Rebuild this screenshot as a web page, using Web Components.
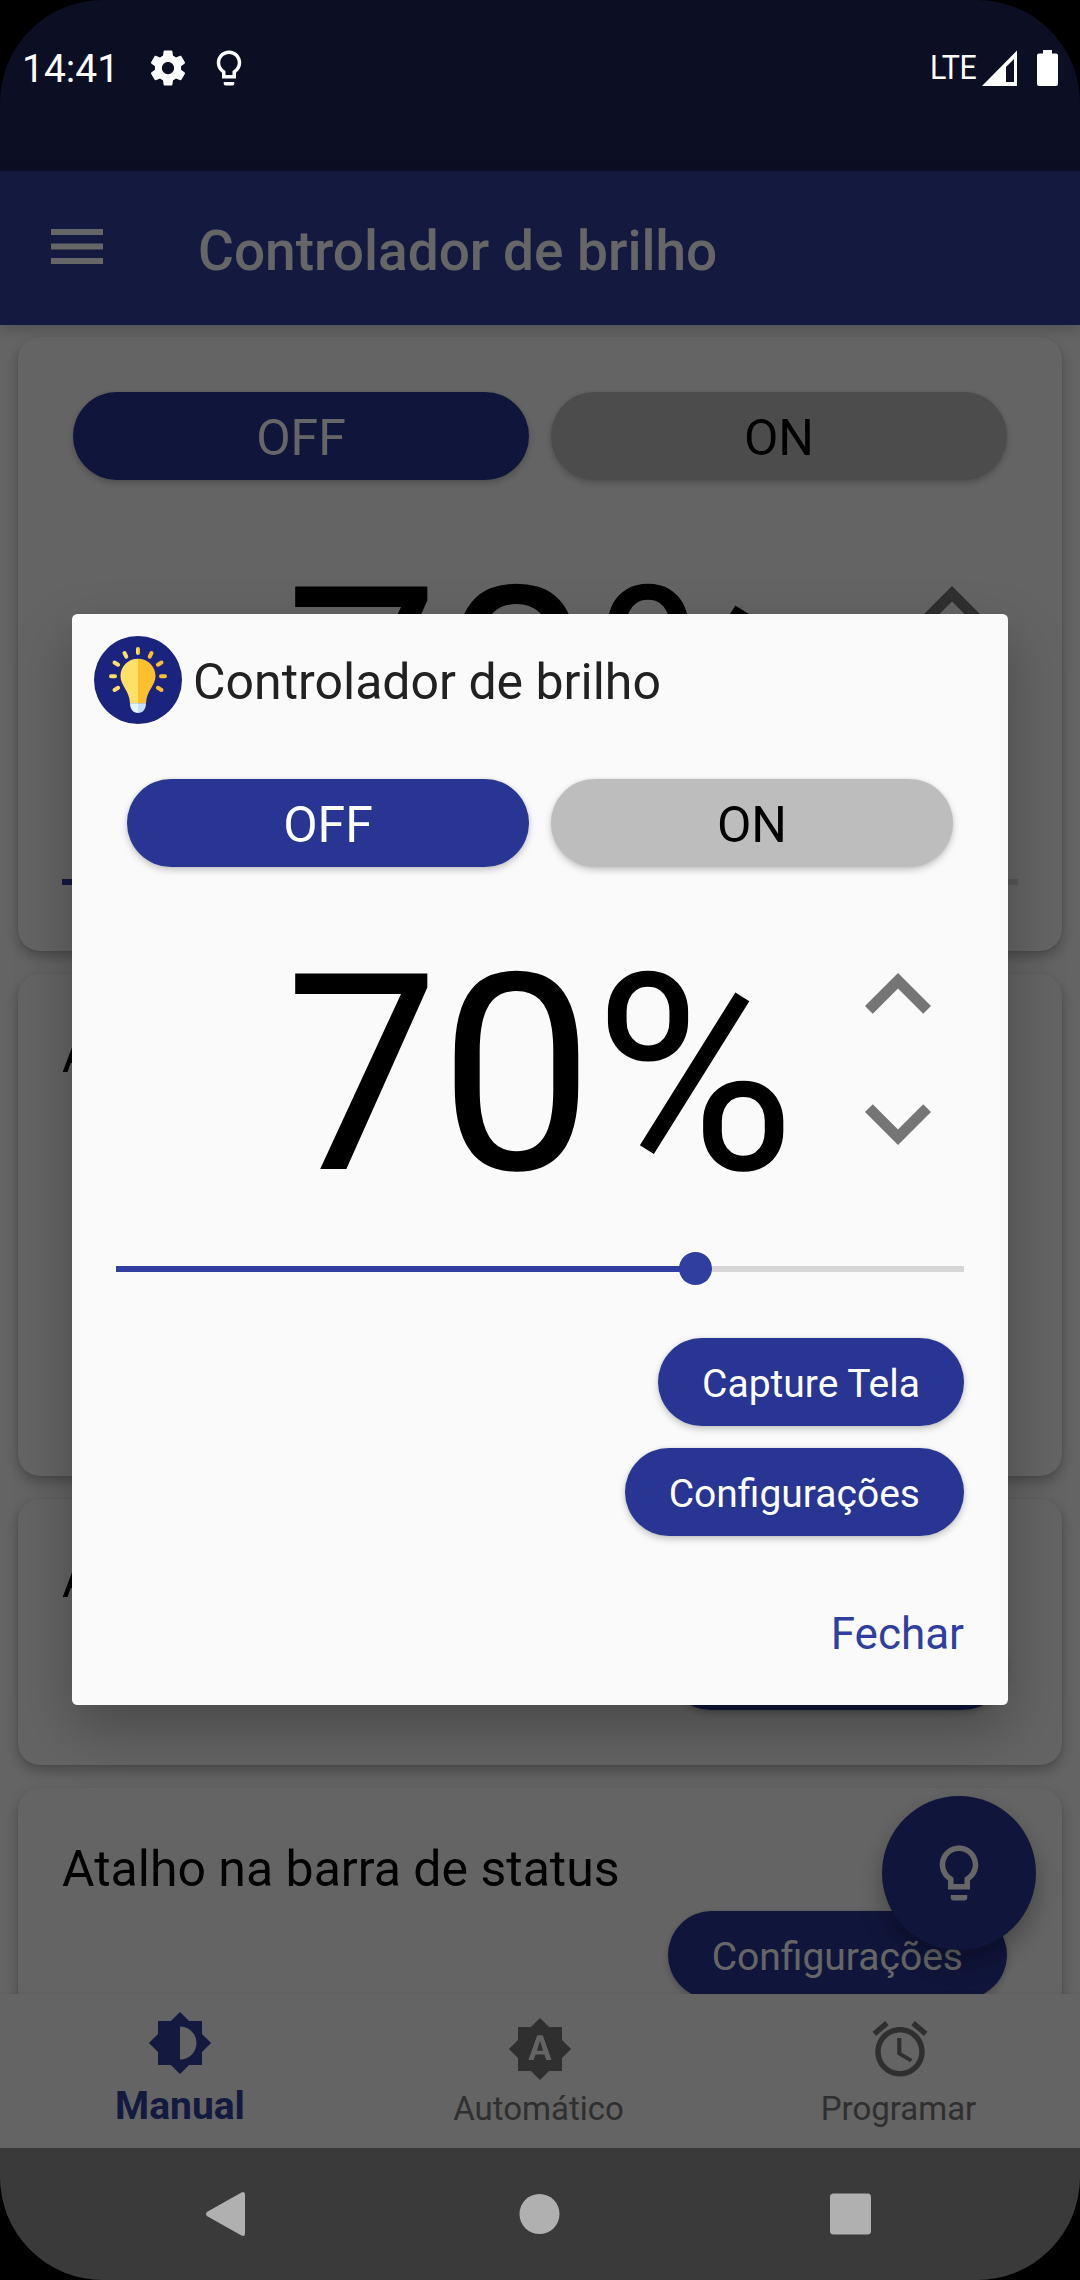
<!DOCTYPE html>
<html lang="pt-BR">
<head>
<meta charset="utf-8">
<title>Controlador de brilho</title>
<style>
  html, body {
    margin: 0;
    background: #000;
  }
  body {
    width: 1080px;
    height: 2280px;
    overflow: hidden;
    font-family: Roboto, sans-serif;
  }
</style>
</head>
<body>
<phone-screen></phone-screen>

<script>
const ICONS = {
  settings: 'M19.43 12.98c.04-.32.07-.64.07-.98s-.03-.66-.07-.98l2.11-1.65c.19-.15.24-.42.12-.64l-2-3.46c-.12-.22-.39-.3-.61-.22l-2.49 1c-.52-.4-1.08-.73-1.69-.98l-.38-2.65C14.46 2.18 14.25 2 14 2h-4c-.25 0-.46.18-.49.42l-.38 2.65c-.61.25-1.17.59-1.69.98l-2.49-1c-.23-.09-.49 0-.61.22l-2 3.46c-.13.22-.07.49.12.64l2.11 1.65c-.04.32-.07.65-.07.98s.03.66.07.98l-2.11 1.65c-.19.15-.24.42-.12.64l2 3.46c.12.22.39.3.61.22l2.49-1c.52.4 1.08.73 1.69.98l.38 2.65c.03.24.24.42.49.42h4c.25 0 .46-.18.49-.42l.38-2.65c.61-.25 1.17-.59 1.69-.98l2.49 1c.23.09.49 0 .61-.22l2-3.46c.12-.22.07-.49-.12-.64l-2.11-1.65zM12 15.5c-1.93 0-3.5-1.57-3.5-3.5s1.57-3.5 3.5-3.5 3.5 1.57 3.5 3.5-1.57 3.5-3.5 3.5z',
  bulb: 'M9 21c0 .55.45 1 1 1h4c.55 0 1-.45 1-1v-1H9v1zm3-19C8.14 2 5 5.14 5 9c0 2.38 1.19 4.47 3 5.74V18h8v-3.26c1.81-1.27 3-3.36 3-5.74 0-3.86-3.14-7-7-7zm2.85 11.1l-.85.6V16h-4v-2.3l-.85-.6C7.8 12.16 7 10.63 7 9c0-2.76 2.24-5 5-5s5 2.24 5 5c0 1.63-.8 3.16-2.15 4.1z',
  up: 'M7.41 15.41L12 10.83l4.59 4.58L18 14l-6-6-6 6z',
  down: 'M7.41 8.59L12 13.17l4.59-4.58L18 10l-6 6-6-6z',
  manual: 'M20 15.31L23.31 12 20 8.69V4h-4.69L12 .69 8.69 4H4v4.69L.69 12 4 15.31V20h4.69L12 23.31 15.31 20H20v-4.69zM12 18V6c3.31 0 6 2.69 6 6s-2.69 6-6 6z',
  auto: 'M10.85 12.65h2.3L12 9l-1.15 3.65zM20 8.69V4h-4.69L12 .69 8.69 4H4v4.69L.69 12 4 15.31V20h4.69L12 23.31 15.31 20H20v-4.69L23.31 12 20 8.69zM14.3 16l-.7-2h-3.2l-.7 2H7.8L11 7h2l3.2 9h-1.9z',
  alarm: 'M22 5.72l-4.6-3.86-1.29 1.53 4.6 3.86L22 5.72zM7.88 3.39L6.6 1.86 2 5.71l1.29 1.53 4.59-3.85zM12.5 8H11v6l4.75 2.85.75-1.23-4-2.37V8zM12 4c-4.97 0-9 4.03-9 9s4.02 9 9 9c4.97 0 9-4.03 9-9s-4.03-9-9-9zm0 16c-3.87 0-7-3.13-7-7s3.13-7 7-7 7 3.13 7 7-3.13 7-7 7z'
};

// <md-icon name="..." size="..">
class MdIcon extends HTMLElement {
  connectedCallback() {
    const size = this.getAttribute('size') || 66;
    this.attachShadow({ mode: 'open' });
    this.shadowRoot.innerHTML = `
      <style>
        :host { display: block; flex: none; width: ${size}px; height: ${size}px; }
        svg { display: block; fill: currentColor; }
      </style>
      <svg width="${size}" height="${size}" viewBox="0 0 24 24"><path d="${ICONS[this.getAttribute('name')]}"/></svg>
    `;
  }
}
customElements.define('md-icon', MdIcon);

class StatusBar extends HTMLElement {
  connectedCallback() {
    this.attachShadow({ mode: 'open' });
    this.shadowRoot.innerHTML = `
      <style>
        :host {
          display: flex;
          justify-content: space-between;
          align-items: flex-start;
          box-sizing: border-box;
          flex: none;
          height: 171px;
          padding: 46px 22px 0 22px;
          background: #0c0e24;
          color: #fff;
        }
        div { display: flex; align-items: center; height: 43px; }
        .time { font-size: 39px; line-height: 46px; width: 125px; padding-top: 2px; }
        .lte {
          font-size: 33px;
          line-height: 43px;
          width: 52px;
          transform: scaleX(.92);
          transform-origin: 0 50%;
          letter-spacing: -.5px;
        }
        svg { display: block; }
      </style>
      <div>
        <span class="time">14:41</span>
        <md-icon name="settings" size="42"></md-icon>
        <md-icon name="bulb" size="42" style="margin-left:19px"></md-icon>
      </div>
      <div>
        <span class="lte">LTE</span>
        <svg width="76" height="36" viewBox="0 0 76 36" fill="#fff">
          <path fill-rule="evenodd" d="M0 36L35 0.500V36zM24 32h8V9l-8 8z"/>
          <path d="M61 0h9v3.500h4a2 2 0 0 1 2 2V34a2 2 0 0 1-2 2H57a2 2 0 0 1-2-2V5.500a2 2 0 0 1 2-2h4z"/>
        </svg>
      </div>
    `;
  }
}
customElements.define('status-bar', StatusBar);

class AppBar extends HTMLElement {
  connectedCallback() {
    this.attachShadow({ mode: 'open' });
    this.shadowRoot.innerHTML = `
      <style>
        :host {
          display: flex;
          align-items: center;
          flex: none;
          height: 154px;
          padding-left: 51px;
          background: #303f9f;
          color: #fff;
          position: relative;
          z-index: 1;
          box-shadow: 0 4px 14px rgba(0, 0, 0, .2);
        }
        svg { display: block; margin-top: -4px; }
        h1 {
          margin: 6px 0 0 95px;
          font-size: 55px;
          line-height: 64px;
          font-weight: 500;
        }
      </style>
      <svg width="52" height="35" fill="#fff">
        <rect width="52" height="6"/><rect y="14.500" width="52" height="6"/><rect y="29" width="52" height="6"/>
      </svg>
      <h1><slot></slot></h1>
    `;
  }
}
customElements.define('app-bar', AppBar);

class PillButton extends HTMLElement {
  connectedCallback() {
    this.attachShadow({ mode: 'open' });
    this.shadowRoot.innerHTML = `
      <style>
        :host {
          display: flex;
          align-items: center;
          justify-content: center;
          box-sizing: border-box;
          height: 88px;
          padding: 4px 44px 0;
          border-radius: 44px;
          background: #283593;
          color: #fff;
          font-size: 39px;
          white-space: nowrap;
          box-shadow: 0 3px 7px rgba(0, 0, 0, .22), 0 0 3px rgba(0, 0, 0, .08);
        }
        :host([large]) { font-size: 50px; flex: 1; }
        :host([off]) { background: #bdbdbd; color: #000; }
      </style>
      <slot></slot>
    `;
  }
}
customElements.define('pill-button', PillButton);

class BrightnessControl extends HTMLElement {
  connectedCallback() {
    this.attachShadow({ mode: 'open' });
    this.shadowRoot.innerHTML = `
      <style>
        :host { display: block; padding: 0 44px; }
        .toggle { display: flex; gap: 22px; margin: 0 11px; }
        .level {
          display: grid;
          grid-template-columns: 1fr auto 1fr;
          height: 322px;
          margin-top: 46.5px;
        }
        .value {
          grid-column: 2;
          font-size: 275px;
          line-height: 322px;
          color: #000;
        }
        .arrows {
          justify-self: end;
          display: flex;
          flex-direction: column;
          margin-top: 15.5px;
          color: #757575;
        }
        md-icon + md-icon { margin-top: -4.5px; }
        .slider {
          display: flex;
          align-items: center;
          height: 33px;
          margin-top: 16.5px;
        }
        .fill { width: 67%; height: 6px; background: #303f9f; }
        .thumb { width: 33px; height: 33px; border-radius: 50%; background: #303f9f; margin-left: -5px; }
        .rest { flex: 1; height: 6px; background: #d6d6d6; }
      </style>
      <div class="toggle">
        <pill-button large>OFF</pill-button>
        <pill-button large off>ON</pill-button>
      </div>
      <div class="level">
        <span class="value">${this.getAttribute('value')}%</span>
        <div class="arrows">
          <md-icon name="up" size="132"></md-icon>
          <md-icon name="down" size="132"></md-icon>
        </div>
      </div>
      <div class="slider">
        <span class="fill"></span><span class="thumb"></span><span class="rest"></span>
      </div>
    `;
  }
}
customElements.define('brightness-control', BrightnessControl);

class SettingsCard extends HTMLElement {
  connectedCallback() {
    const heading = this.getAttribute('heading');
    this.attachShadow({ mode: 'open' });
    this.shadowRoot.innerHTML = `
      <style>
        :host {
          display: flex;
          flex-direction: column;
          box-sizing: border-box;
          flex: none;
          padding-top: 52px;
          border-radius: 22px;
          background: #fafafa;
          box-shadow: 0 6px 14px rgba(0, 0, 0, .26), 0 1px 3px rgba(0, 0, 0, .08);
        }
        h2 {
          margin: 0 44px 13px;
          font-size: 50px;
          line-height: 58px;
          font-weight: 400;
          color: #000;
        }
        ::slotted(pill-button) { align-self: flex-end; margin-right: 55px; }
      </style>
      ${heading ? `<h2>${heading}</h2>` : ''}
      <slot></slot>
    `;
  }
}
customElements.define('settings-card', SettingsCard);

class TabBar extends HTMLElement {
  connectedCallback() {
    this.attachShadow({ mode: 'open' });
    this.shadowRoot.innerHTML = `
      <style>
        :host {
          display: grid;
          grid-template-columns: repeat(3, 1fr);
          flex: none;
          height: 154px;
          background: #fafafa;
          position: relative;
          z-index: 1;
          box-shadow: 0 0 4px rgba(0, 0, 0, .1);
        }
        .tab {
          display: flex;
          flex-direction: column;
          align-items: center;
          justify-content: space-between;
          box-sizing: border-box;
          padding: 22px 0 20px;
          font-size: 33px;
          line-height: 38px;
          color: #757575;
        }
        .tab span { margin-right: 3px; }
        .active {
          padding: 16px 0 19px;
          font-size: 39px;
          line-height: 45px;
          font-weight: 700;
          color: #303f9f;
        }
        .active span { margin-right: 0; }
      </style>
      <div class="tab active"><md-icon name="manual"></md-icon><span>Manual</span></div>
      <div class="tab"><md-icon name="auto"></md-icon><span>Automático</span></div>
      <div class="tab"><md-icon name="alarm"></md-icon><span>Programar</span></div>
    `;
  }
}
customElements.define('tab-bar', TabBar);

class AppLogo extends HTMLElement {
  connectedCallback() {
    this.attachShadow({ mode: 'open' });
    this.shadowRoot.innerHTML = `
      <style>
        :host { display: block; width: 88px; height: 88px; }
        svg { display: block; }
      </style>
      <svg width="88" height="88" viewBox="0 0 88 88">
        <circle cx="44" cy="44" r="44" fill="#1a237e"/>
        <path fill="#ffe066" d="M44 22.700C34 22.700 26.500 30.500 26.500 40C26.500 50 35.500 54 36 67.500H44z"/>
        <path fill="#fdbf2d" d="M44 22.700C54 22.700 61.500 30.500 61.500 40C61.500 50 52.500 54 52 67.500H44z"/>
        <path fill="#e3f4ff" d="M36 67.300H44V77C39 77 36 73 36 67.300z"/>
        <path fill="#c4e2fd" d="M52 67.300H44V77C49 77 52 73 52 67.300z"/>
        <g stroke-width="4" stroke-linecap="round">
          <path stroke="#ffe066" d="M30.500 17l1.800 3.600M20.500 26.500l3.600 2.200M17 40.300h4M20.500 54l3.600-2.200"/>
          <path stroke="#fdbf2d" d="M57.500 17l-1.800 3.600M67.500 26.500l-3.600 2.200M71 40.300h-4M67.500 54l-3.600-2.200"/>
        </g>
        <path fill="#ffe066" d="M44 11a2 2 0 0 0-2 2v4a2 2 0 0 0 2 2z"/>
        <path fill="#fdbf2d" d="M44 11a2 2 0 0 1 2 2v4a2 2 0 0 1-2 2z"/>
      </svg>
    `;
  }
}
customElements.define('app-logo', AppLogo);

class BrightnessDialog extends HTMLElement {
  connectedCallback() {
    this.attachShadow({ mode: 'open' });
    this.shadowRoot.innerHTML = `
      <style>
        :host {
          display: block;
          width: 936px;
          height: 1091px;
          border-radius: 5.5px;
          background: #fafafa;
          box-shadow: 0 24px 55px rgba(0, 0, 0, .27);
        }
        header {
          display: flex;
          align-items: center;
          gap: 11px;
          padding: 22px 22px 55px;
        }
        h2 {
          margin: 4px 0 0;
          font-size: 50px;
          line-height: 58px;
          font-weight: 400;
          color: #212121;
        }
        .actions {
          display: flex;
          flex-direction: column;
          align-items: flex-end;
          gap: 22px;
          padding: 52.5px 44px 0;
        }
        .close {
          margin-top: 50px;
          font-size: 44px;
          line-height: 52px;
          color: #303f9f;
        }
      </style>
      <header><app-logo></app-logo><h2>Controlador de brilho</h2></header>
      <brightness-control value="70"></brightness-control>
      <div class="actions">
        <pill-button>Capture Tela</pill-button>
        <pill-button>Configurações</pill-button>
        <span class="close">Fechar</span>
      </div>
    `;
  }
}
customElements.define('brightness-dialog', BrightnessDialog);

class SystemNav extends HTMLElement {
  connectedCallback() {
    this.attachShadow({ mode: 'open' });
    this.shadowRoot.innerHTML = `
      <style>
        :host {
          display: flex;
          justify-content: space-between;
          align-items: center;
          box-sizing: border-box;
          flex: none;
          height: 132px;
          padding: 0 208px 0 205px;
          background: #3a3a3a;
        }
        svg { display: block; fill: #b0b0b0; }
      </style>
      <svg width="42" height="46"><path d="M1.800 21L36.500 1.400Q40 0 40 3.500V42.500Q40 46 36.500 44.600L1.800 25Q0 23 1.800 21z"/></svg>
      <svg width="45" height="42"><circle cx="23.500" cy="21" r="20"/></svg>
      <svg width="42" height="42"><rect y=".5" width="41" height="41" rx="3.500"/></svg>
    `;
  }
}
customElements.define('system-nav', SystemNav);

class PhoneScreen extends HTMLElement {
  connectedCallback() {
    this.attachShadow({ mode: 'open' });
    this.shadowRoot.innerHTML = `
      <style>
        :host {
          display: flex;
          flex-direction: column;
          width: 1080px;
          height: 2280px;
          border-radius: 103px;
          overflow: hidden;
        }
        .window {
          flex: 1;
          min-height: 0;
          display: flex;
          flex-direction: column;
          position: relative;
          background: #fafafa;
        }
        main {
          flex: 1;
          min-height: 0;
          overflow: hidden;
          display: flex;
          flex-direction: column;
          gap: 23px;
          padding: 12px 18px 0;
        }
        .control { height: 614px; padding-top: 55px; }
        .fab {
          position: absolute;
          right: 44px;
          bottom: 198px;
          z-index: 2;
          display: grid;
          place-items: center;
          width: 154px;
          height: 154px;
          border-radius: 50%;
          background: #283593;
          color: #fff;
          box-shadow: 0 12px 24px rgba(0, 0, 0, .3);
        }
        /* dims the activity behind the dialog */
        .scrim {
          position: absolute;
          inset: 0;
          z-index: 3;
          display: grid;
          place-items: center;
          background: rgba(0, 0, 0, .6);
        }
      </style>
      <status-bar></status-bar>
      <div class="window">
        <app-bar>Controlador de brilho</app-bar>
        <main>
          <settings-card class="control"><brightness-control value="70"></brightness-control></settings-card>
          <settings-card heading="A" style="height:502px"></settings-card>
          <settings-card heading="A" style="height:266px"><pill-button style="width:340px"></pill-button></settings-card>
          <settings-card heading="Atalho na barra de status" style="height:266px"><pill-button>Configurações</pill-button></settings-card>
        </main>
        <tab-bar></tab-bar>
        <div class="fab"><md-icon name="bulb"></md-icon></div>
        <div class="scrim"><brightness-dialog></brightness-dialog></div>
      </div>
      <system-nav></system-nav>
    `;
  }
}
customElements.define('phone-screen', PhoneScreen);
</script>
</body>
</html>
